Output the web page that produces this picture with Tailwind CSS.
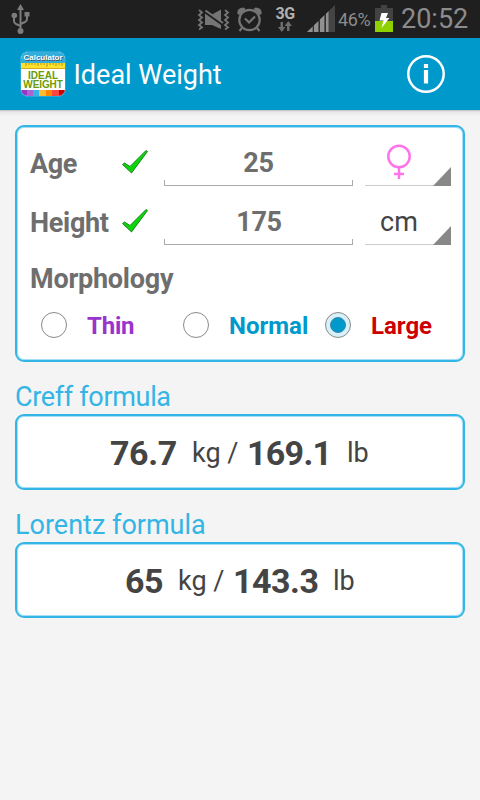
<!DOCTYPE html>
<html lang="en">
<head>
  <meta charset="UTF-8">
  <meta name="viewport" content="width=device-width, initial-scale=1.0">
  <title>Ideal Weight</title>
  <script src="https://cdn.jsdelivr.net/npm/@tailwindcss/browser@4"></script>
</head>
<body class="w-[480px] h-[800px] overflow-hidden bg-[#f4f4f4] font-['Roboto',sans-serif] text-[#444] whitespace-nowrap">

  <!-- Status bar -->
  <div class="flex h-[38px] bg-[#1f1f1f] text-[#8c8c8c]">
    <svg class="ml-[10px] w-[22px] h-[38px] shrink-0" viewBox="10 0 22 38" fill="none" stroke="#7c7c7c" stroke-width="2">
      <path d="M20.5 8v23M14 17v4q0 2 2 3l4.500 2M27 14v5q0 2-2 3l-4.500 2"/>
      <path d="M20.500 4l3.500 6h-7z" fill="#7c7c7c" stroke="none"/>
      <circle cx="14.300" cy="15.500" r="2.800" fill="#7c7c7c" stroke="none"/>
      <path d="M24.500 12h5v4.500h-5z" fill="#7c7c7c" stroke="none"/>
      <circle cx="20.500" cy="31" r="3" fill="#7c7c7c" stroke="none"/>
    </svg>
    <svg class="ml-[164px] w-[36px] h-[38px] shrink-0" viewBox="196 0 36 38" fill="none" stroke="#757575" stroke-width="1.800">
      <path d="M199 10l3 2.500-3 2.500 3 2.500-3 2.500 3 2.500-3 2.500 3 2.500-3 2"/>
      <path d="M225 10l3 2.500-3 2.500 3 2.500-3 2.500 3 2.500-3 2.500 3 2.500-3 2"/>
      <path d="M205 13.500l16 11.500V29l-9-4h-7zM212 14.500l9-5V21z" fill="#757575" stroke="none"/>
      <path d="M205.500 10.500l17.500 12.500" stroke="#757575" stroke-width="2"/>
    </svg>
    <svg class="ml-[4px] w-[28px] h-[38px] shrink-0" viewBox="236 0 28 38" fill="none" stroke="#757575" stroke-width="2.200">
      <circle cx="249.500" cy="20" r="10.200"/>
      <path d="M245 18.500l4 4 6-6"/>
      <path d="M242 28l-2.500 3M257 28l2.500 3"/>
      <path d="M237.500 14q-1-6 6-6.500l2 1.500-6.500 6zM261.500 14q1-6-6-6.500l-2 1.500 6.500 6z" fill="#757575" stroke="none"/>
    </svg>
    <div class="ml-[9px] w-[24px] flex flex-col items-center pt-[5px]">
      <span class="h-[16px] text-[16px] leading-[17px] font-bold tracking-[-0.500px] text-[#b0b0b0]">3G</span>
      <svg class="w-[14px] h-[11px] shrink-0" viewBox="0 0 14 11" fill="#6d6d6d">
        <path d="M2.500 1h2.500v5h2.500l-3.700 5L0 6h2.500zM9 10h2.500V5H14l-3.700-5L6.500 5H9z"/>
      </svg>
    </div>
    <svg class="ml-[9px] w-[30px] h-[38px] shrink-0" viewBox="306 0 30 38">
      <path d="M307 32L335 5v27z" fill="#444"/>
      <path d="M307 32l6-5.800V32zM314 25.200l4.500-4.300V32H314zM320 19.500l4.500-4.400V32H320zM326 13.700l2.500-2.400V32H326z" fill="#919191"/>
      <path d="M313.200 25v7M319.200 20v12M325.200 14v18" stroke="#292929"/>
    </svg>
    <span class="ml-[2px] w-[35px] pt-[9px] text-[18px] leading-[22px] tracking-[-0.400px]">46%</span>
    <svg class="ml-[2px] w-[18px] h-[38px] shrink-0" viewBox="375 0 18 38">
      <path d="M381 5h6v3h6v13h-18V8h6z" fill="#424242"/>
      <path d="M375 21h18v11h-18z" fill="#8fd000"/>
      <path d="M381.500 13h6.500l-2 5h3.500L381.500 28l2-7.500H379.500z" fill="#fff"/>
    </svg>
    <span class="ml-[8px] pt-[3px] text-[27px] leading-[32px]">20:52</span>
  </div>

  <!-- Action bar -->
  <div class="flex h-[72px] bg-[#0099cc] text-white">
    <div class="ml-[20px] mt-[13px] w-[46px] h-[46px] rounded-[8px] overflow-hidden bg-white border border-[#2aa6d6] flex flex-col">
      <div class="h-[11px] shrink-0 bg-[#33addc] text-center font-['Liberation_Sans',sans-serif] text-[8px] leading-[11px] font-bold text-shadow-[1px_1px_0_#456]">Calculator</div>
      <svg class="w-[44px] h-[6px] shrink-0" viewBox="0 0 44 6">
        <path d="M0 0h44v6H0z" fill="#fbe02c"/>
        <path d="M0 5.500h44" stroke="#d8aa20"/>
        <path d="M5 0v3M8 0v2M11 0v2M14 0v2M17 0v3M20 0v2M23 0v2M26 0v4M29 0v2M32 0v2M35 0v3M38 0v2M41 0v3" stroke="#a8841e" stroke-width=".8"/>
      </svg>
      <div class="h-[21px] shrink-0 flex flex-col items-center font-['Liberation_Sans',sans-serif] font-bold text-[#6b9b06]">
        <span class="h-[11px] text-[10px] leading-[13px]">IDEAL</span>
        <span class="h-[10px] text-[10px] leading-[10px] tracking-[-0.100px]">WEIGHT</span>
      </div>
      <div class="flex h-[6px] shrink-0">
        <div class="w-[6px] bg-[#9933cc]"></div>
        <div class="w-[6px] bg-[#aa66cc]"></div>
        <div class="w-[6px] bg-[#33b5e5]"></div>
        <div class="w-[7px] bg-[#ffbb33]"></div>
        <div class="w-[6px] bg-[#ff8800]"></div>
        <div class="w-[7px] bg-[#ff4444]"></div>
        <div class="w-[6px] bg-[#cc0000]"></div>
      </div>
    </div>
    <h1 class="ml-[7.500px] w-[160px] pt-px text-[27px] leading-[72px]">Ideal Weight</h1>
    <svg class="ml-[172.500px] mt-[16px] w-[40px] h-[40px]" viewBox="0 0 40 40" fill="none" stroke="#fff">
      <circle cx="20" cy="20" r="17.700" stroke-width="2.500"/>
      <path d="M20 16v13.500" stroke-width="4.200"/>
      <path d="M20 10v4" stroke-width="4.200"/>
    </svg>
  </div>
  <div class="h-[6px] bg-linear-to-b from-[#bcbcbc] via-[#e6e6e6] via-30% to-[#f4f4f4]"></div>

  <main class="px-[15px] pt-[9px]">
    <!-- Input form -->
    <section class="h-[237px] rounded-[9px] border-2 border-[#33b5e5] bg-white inset-ring inset-ring-[#a4def5] pl-[13px] pr-[11px] text-[27px] font-bold text-[#6e6e6e]">
      <div class="flex h-[59px]">
        <span class="w-[91px] shrink-0 pt-[21px] leading-[33px] tracking-[-0.400px]">Age</span>
        <svg class="mt-[22px] w-[28px] h-[26px] shrink-0" viewBox="0 0 28 26">
          <path d="M1.500 15.500l2-1.500 5.500 3.500L25 1.500l1.500 1L10.500 24z" fill="#0cd50c" stroke="#147a14" stroke-width=".9"/>
        </svg>
        <div class="ml-[15px] mt-[17px] w-[189px] h-[42px] shrink-0 flex flex-col">
          <span class="h-[36px] text-center leading-[39px] tracking-[-0.200px]">25</span>
          <span class="h-[6px] border border-t-0 border-[#aaa]"></span>
        </div>
        <div class="ml-[12px] mt-[12px] w-[86px] h-[47px] shrink-0 flex justify-between border-b border-[#ccc]">
          <svg class="ml-[20px] mt-[4px] w-[28px] h-[38px]" viewBox="0 0 28 38" fill="none" stroke="#ff73ea" stroke-width="2.500">
            <circle cx="14" cy="13.500" r="10.700"/>
            <path d="M14 24v12M9 31h10"/>
          </svg>
          <svg class="mt-[28px] w-[18px] h-[19px]" viewBox="0 0 18 19"><path d="M0 19L18 0v19z" fill="#888"/></svg>
        </div>
      </div>
      <div class="flex h-[59px]">
        <span class="w-[91px] shrink-0 pt-[21px] leading-[33px] tracking-[-0.300px]">Height</span>
        <svg class="mt-[22px] w-[28px] h-[26px] shrink-0" viewBox="0 0 28 26">
          <path d="M1.500 15.500l2-1.500 5.500 3.500L25 1.500l1.500 1L10.500 24z" fill="#0cd50c" stroke="#147a14" stroke-width=".9"/>
        </svg>
        <div class="ml-[15px] mt-[17px] w-[189px] h-[42px] shrink-0 flex flex-col">
          <span class="h-[36px] pl-px text-center leading-[39px] tracking-[-0.300px]">175</span>
          <span class="h-[6px] border border-t-0 border-[#aaa]"></span>
        </div>
        <div class="ml-[12px] mt-[12px] w-[86px] h-[47px] shrink-0 flex justify-between border-b border-[#ccc]">
          <span class="ml-[15px] leading-[49px] font-normal text-[#444]">cm</span>
          <svg class="mt-[28px] w-[18px] h-[19px]" viewBox="0 0 18 19"><path d="M0 19L18 0v19z" fill="#888"/></svg>
        </div>
      </div>
      <div class="h-[56px] pt-[18px] leading-[33px] tracking-[-0.250px]">Morphology</div>
      <div class="flex h-[48px] items-center text-[24px]">
        <span class="ml-[11px] w-[26px] h-[26px] rounded-full border-[1.500px] border-[#8a8a8a]"></span>
        <span class="ml-[20px] w-[96px] pt-px tracking-[-0.200px] text-[#9933cc]">Thin</span>
        <span class="w-[26px] h-[26px] rounded-full border-[1.500px] border-[#8a8a8a]"></span>
        <span class="ml-[20px] w-[96px] pt-px text-[#0099cc]">Normal</span>
        <span class="w-[26px] h-[26px] shrink-0 rounded-full border-[1.500px] border-[#8a8a8a] bg-[#d8f0f9] flex items-center justify-center">
          <span class="w-[16px] h-[16px] rounded-full border border-[#3a87a3] bg-[#0099cc]"></span>
        </span>
        <span class="ml-[20px] pt-px text-[#cc0000]">Large</span>
      </div>
    </section>

    <!-- Results -->
    <h2 class="mt-[17px] h-[35px] text-[27px] leading-[36px] tracking-[-0.330px] text-[#33b5e5]">Creff formula</h2>
    <section class="flex h-[76px] rounded-[9px] border-2 border-[#33b5e5] bg-white inset-ring inset-ring-[#a4def5] pl-[93px] text-[27px] leading-[74px]">
      <b class="w-[82px] text-[34px] tracking-[-0.400px]">76.7</b>
      <span class="w-[55px]">kg /</span>
      <b class="w-[100px] text-[34px] tracking-[-0.700px]">169.1</b>
      <span>lb</span>
    </section>

    <h2 class="mt-[17px] h-[35px] text-[27px] leading-[36px] text-[#33b5e5]">Lorentz formula</h2>
    <section class="flex h-[76px] rounded-[9px] border-2 border-[#33b5e5] bg-white inset-ring inset-ring-[#a4def5] pl-[108px] text-[27px] leading-[74px]">
      <b class="w-[53px] text-[34px] tracking-[-0.400px]">65</b>
      <span class="w-[55px]">kg /</span>
      <b class="w-[100px] text-[34px] tracking-[-0.500px]">143.3</b>
      <span>lb</span>
    </section>
  </main>
</body>
</html>
